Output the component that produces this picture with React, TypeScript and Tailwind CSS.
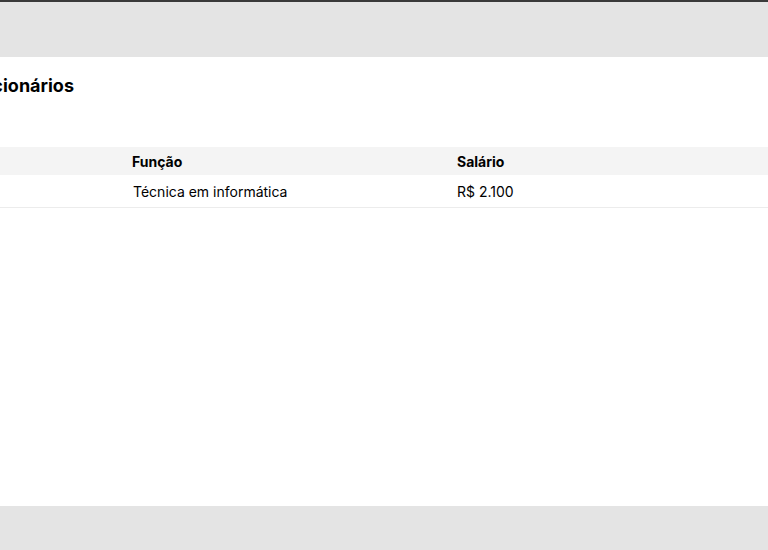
export default function App() {
  return (
    <div className="w-[768px] h-[550px] overflow-hidden bg-white flex flex-col text-black" style={{ fontFamily: "Inter, 'Noto Sans', sans-serif" }}>
      <div className="h-[57px] shrink-0 bg-[#e4e4e4] border-t-2 border-[#3a3a3a]" />
      <div className="flex-1 overflow-hidden">
        <h1 className="mt-[18px] -ml-[40px] text-[18px] font-bold leading-[22px] whitespace-nowrap">Funcionários</h1>
        <div className="mt-[50px]">
          <div className="flex h-[28px] items-center bg-[#f4f4f4] text-[14px] font-bold">
            <div className="w-[132px]" />
            <div className="w-[325px]">Função</div>
            <div>Salário</div>
          </div>
          <div className="flex h-[33px] items-center border-b border-[#ececec] text-[14px]">
            <div className="w-[133px]" />
            <div className="w-[324px]">Técnica em informática</div>
            <div>R$ 2.100</div>
          </div>
        </div>
      </div>
      <div className="h-[44px] shrink-0 bg-[#e4e4e4]" />
    </div>
  );
}
